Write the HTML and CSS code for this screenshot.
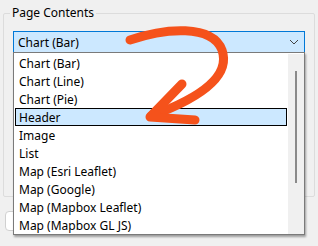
FILE: index.html
```html
<!DOCTYPE html>
<html lang="en">
<head>
<meta charset="UTF-8" />
<title>Page Contents</title>
<link rel="stylesheet" href="styles.css">
</head>
<body>

<fieldset class="group">
  <legend>Page Contents</legend>
  <div class="combo">
    <span class="combo-text">Chart (Bar)</span>
    <svg class="chevron" width="10" height="6" viewBox="0 0 10 6"><path d="M1 1 L5 5 L9 1" fill="none" stroke="#444" stroke-width="1"/></svg>
  </div>

  <!-- open dropdown list -->
  <div class="dropdown">
    <ul class="items">
      <li>Chart (Bar)</li>
      <li>Chart (Line)</li>
      <li>Chart (Pie)</li>
      <li class="selected">Header</li>
      <li>Image</li>
      <li>List</li>
      <li>Map (Esri Leaflet)</li>
      <li>Map (Google)</li>
      <li>Map (Mapbox Leaflet)</li>
      <li>Map (Mapbox GL JS)</li>
    </ul>
    <div class="scrollbar"><div class="thumb"></div></div>
  </div>
</fieldset>

<div class="below">
  <div class="field"></div>
</div>

<svg class="arrow" width="318" height="246" viewBox="0 0 318 246">
  <g fill="none" stroke="#f5521b" stroke-width="9" stroke-linecap="round" stroke-linejoin="round">
    <path d="M130 40 C165 28 212 24 222 50 C231 76 200 98 151 116" />
    <path d="M182 84 L150 117 L195 120" />
  </g>
</svg>

</body>
</html>
```

FILE: styles.css
```css
body {
  margin: 0;
  width: 318px;
  height: 246px;
  background: #f0f0f0;
  font-family: "Noto Sans", "Liberation Sans", sans-serif;
  font-size: 12px;
  color: #000;
  position: relative;
  overflow: hidden;
}
.group {
  position: relative;
  margin: 5px 3px 0 3px;
  padding: 10px 9px 0 9px;
  height: 180px;
  border: 1px solid #dcdcdc;
  border-radius: 2px;
}
.group legend {
  padding: 0 2px;
  margin-left: -3px;
  line-height: 16px;
}
.combo {
  height: 20px;
  border: 1px solid #0078d7;
  background: #cce8ff;
  display: flex;
  align-items: center;
  padding: 0 4px;
}
.combo-text {
  flex: 1;
}
.chevron {
  margin-right: 1px;
}
.dropdown {
  position: absolute;
  left: 9px;
  right: 9px;
  top: 31px;
  height: 180px;
  border: 1px solid #7a7a7a;
  background: #fff;
  box-shadow: 1px 2px 2px rgba(0, 0, 0, 0.35);
  display: flex;
  padding: 1px 0 0 1px;
}
.items {
  list-style: none;
  margin: 0;
  padding: 0;
  flex: 1;
}
.items li {
  height: 18px;
  line-height: 17px;
  padding-left: 3px;
  border: 1px solid transparent;
  box-sizing: border-box;
  margin-right: 1px;
}
.items li.selected {
  background: #cce8ff;
  border-color: #000;
}
.scrollbar {
  width: 16px;
  background: #f0f0f0;
  position: relative;
}
.thumb {
  position: absolute;
  left: 7px;
  top: 17px;
  width: 2px;
  height: 112px;
  background: #8a8a8a;
}
.below {
  padding: 14px 5px 0 5px;
}
.field {
  width: 84px;
  height: 18px;
  background: #fff;
  border: 1px solid #d0d0d0;
  border-radius: 4px;
}
.arrow {
  position: absolute;
  left: 0;
  top: 0;
}
```
